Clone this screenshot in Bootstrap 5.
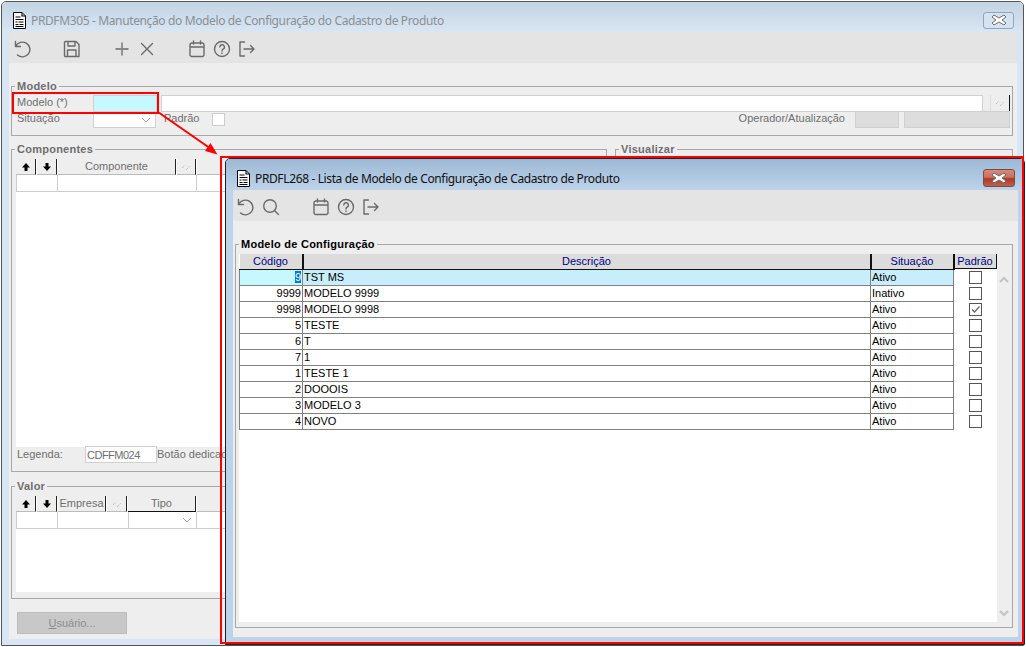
<!DOCTYPE html>
<html lang="pt">
<head>
<meta charset="utf-8">
<title>PRDFM305</title>
<link href="https://cdn.jsdelivr.net/npm/bootstrap@5.3.0/dist/css/bootstrap.min.css" rel="stylesheet">
<style>
html,body{margin:0;height:100%;background:#fff;overflow:hidden}
body{font:11px/13px "Liberation Sans",Arial,sans-serif;color:#6e6e6e;position:relative}
.win{position:absolute;border:1px solid #555;border-radius:5px 5px 0 0;overflow:hidden}
.win-back{left:1px;top:1px;width:1023px;height:645px;background:#d8e5f3;padding:0 6px 6px 7px}
.win-front{left:225px;top:158px;width:800px;height:487px;background:#bdd3ea;padding:0 6px 7px 7px;color:#000;border-color:#222}
.ttl{height:30px;margin:0 -6px 0 -7px;padding:6px 9px 0 11px}
.win-back .ttl{background:linear-gradient(#c3d3e2,#d9e6f4)}
.win-front .ttl{background:linear-gradient(#9db8d5,#bdd3ea);height:31px;padding-top:7px}
.ttl-text{font:12px/16px "Noto Sans",sans-serif;color:#8a8f96;margin-left:5px;padding-top:2px;letter-spacing:-.37px}
.win-front .ttl-text{color:#111}
.xbtn{width:31px;height:17px;border:1px solid #8fa6bd;border-radius:3px;background:#d5e2ef}
.win-front .xbtn{width:32px;height:18px;border-color:#7a4a44;background:linear-gradient(#d68a78 0,#c9705c 45%,#a83a28 55%,#c0604c 100%)}
.tbar{height:31px;background:#e4e4e4;padding:2px 0 0 4px}
.win-front .tbar{padding-left:3px}
.tic{width:18px;height:18px;flex:none;fill:none;stroke:#6a6a6a;stroke-width:1.4;stroke-linecap:round;stroke-linejoin:round}
.client-b{height:576px;background:#eee;padding:17px 4px 0 2px}
.client-f{height:416px;background:#eee;padding:17px 5px 0 2px}
.grp{border:1px solid #a8a8a8;margin:0;padding:0;min-width:0}
.grp legend{float:none;width:auto;font:bold 11px/13px "Liberation Sans",sans-serif;margin:0 0 0 -1px;padding:0 2px;letter-spacing:.25px}
.grp-m{height:56px;padding:2px 2px 0 5px}
.grp-m legend{margin-left:-2px}
.grp-c{height:329px;padding:3px 4px 0 4px}
.grp-v{height:119px;padding:3px 4px 0 4px}
.grp-w{height:456px;padding:3px 4px 0}
.grp-l{height:390px;padding:3px 0 0 3px}
.grp-l legend{margin-left:0}
.col-left{width:596px}
.frow{height:16px}
.lab-w{width:76px}
.lbt{padding-bottom:2px}
.fld{height:17px;border:1px solid #d0d0d0;background:#fff;margin-bottom:-1px}
.fld-cy{width:64px;background:#c6f9ff}
.fld-g{background:#ddd}
.chk-o{width:13px;height:13px;border:1px solid #ccc;background:#fff;margin-left:13px}
.ic-btn{width:20px;height:17px;background:#eee;border-right:1px solid #111;border-left:1px solid #ddd;margin-left:7px}
.panel{background:#fff}
.hc{height:16px;background:#eee;border-right:1px solid #222;border-bottom:1px solid #bbb;line-height:15px;text-align:center;margin-right:1px;flex:none}
.hc-on{border-bottom-color:#111}
.rc{height:17px;border:solid #ccc;border-width:0 1px 1px 0;flex:none;background:#fff}
.rc:first-child{border-left:1px solid #ccc}
.nm{background:#fff;width:72px;height:17px;border:1px solid #d0d0d0;padding-left:1px;line-height:17px;letter-spacing:-.5px}
.user-btn{width:110px;height:22px;background:#c8c8c8;border:1px solid #bbb;margin:13px 0 0 6px;line-height:21px;text-align:center;color:#8c8c8c}
.user-btn u{text-decoration:underline}
.list{width:758px;height:368px;background:#fff}
.sb{width:14px;height:368px;padding:22px 0 5px}
.gridt.table{width:714px;table-layout:fixed;border-collapse:collapse;margin:0;--bs-table-bg:transparent}
.gridt.table>:not(caption)>*>*{padding:0 1px;height:16px;line-height:15px;font-size:11px;border:1px solid #808080;color:#000;box-shadow:none;background:transparent;white-space:nowrap}
.gridt.table>thead>tr>th{height:15px;background:#dcdcdc;color:#000080;font-weight:400;text-align:center;border:0;border-right:2px solid #111;border-bottom:1px solid #111}
.gridt.table>tbody>tr.cur>td{background:#c8eefc}
.gridt.table>tbody>tr>td.num{text-align:right;padding-right:1px}
.gridt.table>tbody>tr.cur>td.num{background:#c6f9ff}
.hi{background:#0078d7;color:#fff}
.chkr{height:16px}
.bx{width:13px;height:13px;border:1px solid #555;background:#fff;display:block}
.thp{height:15px;background:#dcdcdc;color:#000080;text-align:center;line-height:15px;border-right:1px solid #111;border-bottom:1px solid #111;width:42px}
.redbox{position:absolute;border:2px solid #f00;pointer-events:none}
.rb1{left:12px;top:92px;width:147px;height:22px}
.rb2{left:220px;top:156px;width:804px;height:488px;border-width:2.5px}
.arrow{position:absolute;left:150px;top:105px;width:80px;height:60px;overflow:visible}
.flex-none{flex:none}
.tb-g7{margin-left:7px}
.tb-g8{margin-left:8px}
.tb-g32{margin-left:32px}
.fld-sel{width:63px}
.fld-a{width:44px;margin-left:10px}
.fld-b{width:106px;margin-left:5px}
.row2{margin-top:7px}
.pnl-c{height:288px}
.pnl-v{height:96px}
.leg-row{height:17px;margin:-1px 0 0 1px}
.leg-l{width:68px}
.w-a{width:20px}
.w-c{width:118px}
.w-s{width:19px}
.w-s2{width:20px}
.w-e{width:48px}
.w-t{width:68px}
.w-l{width:42px}
.w-m{width:139px}
.w-v{width:71px}
.c1{width:63px}
.c2{width:568px}
.c3{width:83px}
</style>
</head>
<body>
<svg width="0" height="0" class="d-block position-absolute">
<defs>
<symbol id="i-doc" viewBox="0 0 13 17"><path d="M1 .5h8l3.500 3.500v12.500H.5V.5z" fill="#fff" stroke="#000"/><path d="M9 .5V4h3.500M2.500 5h5M2.500 7.500h8M2.500 10h2M5.500 10h5M2.500 12.500h3M6.500 12.500h4M2.500 14.500h8" fill="none" stroke="#000" stroke-width="1.100"/></symbol>
<symbol id="i-undo" viewBox="0 0 18 18"><path d="M2.500 1.500V6.500H7.500M2.800 6.300A7.400 7.400 0 1 1 4.500 15"/></symbol>
<symbol id="i-save" viewBox="0 0 18 18"><path d="M2.500 1.500H13L16 4.500V16.500H2.500A1 1 0 0 1 1.500 15.500V2.500A1 1 0 0 1 2.500 1.500zM5 1.500V6H12V1.500M4.500 16.500V10H13V16.500"/></symbol>
<symbol id="i-plus" viewBox="0 0 18 18"><path d="M9 2.500V15.500M2.500 9H15.500" stroke="#888" stroke-width="1.800" stroke-linecap="butt"/></symbol>
<symbol id="i-x" viewBox="0 0 18 18"><path d="M3.500 3.500L14.500 14.500M14.500 3.500L3.500 14.500" stroke-width="1.400"/></symbol>
<symbol id="i-cal" viewBox="0 0 18 18"><path d="M3.500 3H14.500A2 2 0 0 1 16 5V15A2 2 0 0 1 14.500 16.500H3.500A2 2 0 0 1 2 15V5A2 2 0 0 1 3.500 3zM2 7H16M5.500 1V4M12.500 1V4"/></symbol>
<symbol id="i-help" viewBox="0 0 18 18"><circle cx="9" cy="9" r="7.500"/><path d="M6.800 7A2.300 2.300 0 1 1 10 9.200C9.300 9.600 9 10 9 11M9 13V13.600"/></symbol>
<symbol id="i-exit" viewBox="0 0 18 18"><path d="M6.500 2H2V16H6.500M6 9H16M12.500 5.500L16 9L12.500 12.500"/></symbol>
<symbol id="i-mag" viewBox="0 0 18 18"><circle cx="8" cy="8" r="6.300"/><path d="M12.500 12.500L16.500 16.500"/></symbol>
<symbol id="i-sl" viewBox="0 0 12 10"><path d="M2 6L5 3M6 8L10 4" stroke="#aaa" stroke-dasharray="1 1" fill="none"/></symbol>
<symbol id="i-up" viewBox="0 0 10 10"><path d="M5 1L9 5.500H6.500V9H3.500V5.500H1z" fill="#000"/></symbol>
<symbol id="i-dn" viewBox="0 0 10 10"><path d="M5 9L9 4.500H6.500V1H3.500V4.500H1z" fill="#000"/></symbol>
<symbol id="i-cv" viewBox="0 0 10 6"><path d="M1 1L5 5L9 1" fill="none" stroke="#aaa"/></symbol>
<symbol id="i-xx" viewBox="0 0 16 12"><path d="M3 1L8 4L13 1L15 3L11 6L15 9L13 11L8 8L3 11L1 9L5 6L1 3z" fill="#fff" stroke="#6d6d6d"/></symbol>
</defs>
</svg>

<div class="win win-back">
  <div class="ttl d-flex align-items-center">
    <svg width="13" height="17"><use href="#i-doc"/></svg>
    <span class="ttl-text flex-grow-1">PRDFM305 - Manutenção do Modelo de Configuração do Cadastro de Produto</span>
    <div class="xbtn d-flex align-items-center justify-content-center"><svg width="16" height="12"><use href="#i-xx"/></svg></div>
  </div>
  <div class="tbar d-flex align-items-center">
    <svg class="tic"><use href="#i-undo"/></svg>
    <svg class="tic tb-g32"><use href="#i-save"/></svg>
    <svg class="tic tb-g32"><use href="#i-plus"/></svg>
    <svg class="tic tb-g7"><use href="#i-x"/></svg>
    <svg class="tic tb-g32"><use href="#i-cal"/></svg>
    <svg class="tic tb-g7"><use href="#i-help"/></svg>
    <svg class="tic tb-g7"><use href="#i-exit"/></svg>
  </div>
  <div class="client-b">
    <fieldset class="grp grp-m">
      <legend>Modelo</legend>
      <div class="frow d-flex align-items-center">
        <span class="lab-w lbt">Modelo (*)</span>
        <div class="fld fld-cy"></div>
        <div class="fld flex-grow-1 ms-1"></div>
        <div class="ic-btn d-flex align-items-center justify-content-center"><svg width="12" height="10"><use href="#i-sl"/></svg></div>
      </div>
      <div class="frow d-flex align-items-center">
        <span class="lab-w lbt">Situação</span>
        <div class="fld fld-sel d-flex align-items-center justify-content-end pe-1"><svg width="10" height="6"><use href="#i-cv"/></svg></div>
        <span class="ms-2 lbt">Padrão</span>
        <div class="chk-o"></div>
        <span class="ms-auto lbt">Operador/Atualização</span>
        <div class="fld fld-g fld-a"></div>
        <div class="fld fld-g fld-b"></div>
      </div>
    </fieldset>
    <div class="d-flex gap-2 row2">
      <div class="col-left flex-none">
        <fieldset class="grp grp-c">
          <legend>Componentes</legend>
          <div class="panel pnl-c">
            <div class="d-flex">
              <div class="hc w-a"><svg width="10" height="10"><use href="#i-up"/></svg></div>
              <div class="hc w-a"><svg width="10" height="10"><use href="#i-dn"/></svg></div>
              <div class="hc w-c">Componente</div>
              <div class="hc w-s"><svg width="12" height="10"><use href="#i-sl"/></svg></div>
              <div class="hc flex-grow-1"></div>
            </div>
            <div class="d-flex">
              <div class="rc w-l"></div>
              <div class="rc w-m"></div>
              <div class="rc flex-grow-1"></div>
            </div>
          </div>
          <div class="d-flex align-items-center leg-row">
            <span class="leg-l">Legenda:</span>
            <div class="nm">CDFFM024</div>
            <span>Botão dedicado</span>
          </div>
        </fieldset>
        <fieldset class="grp grp-v mt-2">
          <legend>Valor</legend>
          <div class="panel pnl-v">
            <div class="d-flex">
              <div class="hc w-a"><svg width="10" height="10"><use href="#i-up"/></svg></div>
              <div class="hc w-a"><svg width="10" height="10"><use href="#i-dn"/></svg></div>
              <div class="hc w-e">Empresa</div>
              <div class="hc w-s2"><svg width="12" height="10"><use href="#i-sl"/></svg></div>
              <div class="hc hc-on w-t">Tipo</div>
              <div class="hc flex-grow-1">Código</div>
            </div>
            <div class="d-flex">
              <div class="rc w-l"></div>
              <div class="rc w-v"></div>
              <div class="rc w-t d-flex align-items-center justify-content-end pe-1"><svg width="10" height="6"><use href="#i-cv"/></svg></div>
              <div class="rc flex-grow-1"></div>
            </div>
          </div>
        </fieldset>
        <div class="user-btn"><u>U</u>suário...</div>
      </div>
      <div class="flex-grow-1">
        <fieldset class="grp grp-w"><legend>Visualizar</legend></fieldset>
      </div>
    </div>
  </div>
</div>

<div class="redbox rb1"></div>
<svg class="arrow" viewBox="0 0 80 60"><path d="M8 7L64 46" stroke="#f00" stroke-width="2" fill="none"/><path d="M67.500 49.500L55 46L60.500 38z" fill="#f00"/></svg>

<div class="win win-front">
  <div class="ttl d-flex align-items-center">
    <svg width="13" height="17"><use href="#i-doc"/></svg>
    <span class="ttl-text flex-grow-1">PRDFL268 - Lista de Modelo de Configuração de Cadastro de Produto</span>
    <div class="xbtn d-flex align-items-center justify-content-center"><svg width="16" height="12"><use href="#i-xx"/></svg></div>
  </div>
  <div class="tbar d-flex align-items-center">
    <svg class="tic"><use href="#i-undo"/></svg>
    <svg class="tic tb-g8"><use href="#i-mag"/></svg>
    <svg class="tic tb-g32"><use href="#i-cal"/></svg>
    <svg class="tic tb-g7"><use href="#i-help"/></svg>
    <svg class="tic tb-g7"><use href="#i-exit"/></svg>
  </div>
  <div class="client-f">
    <fieldset class="grp grp-l">
      <legend>Modelo de Configuração</legend>
      <div class="d-flex">
        <div class="list d-flex align-items-start">
          <table class="table gridt">
            <colgroup><col class="c1"><col class="c2"><col class="c3"></colgroup>
            <thead><tr><th>Código</th><th>Descrição</th><th>Situação</th></tr></thead>
            <tbody>
              <tr class="cur"><td class="num"><span class="hi">9</span></td><td>TST MS</td><td>Ativo</td></tr>
              <tr><td class="num">9999</td><td>MODELO 9999</td><td>Inativo</td></tr>
              <tr><td class="num">9998</td><td>MODELO 9998</td><td>Ativo</td></tr>
              <tr><td class="num">5</td><td>TESTE</td><td>Ativo</td></tr>
              <tr><td class="num">6</td><td>T</td><td>Ativo</td></tr>
              <tr><td class="num">7</td><td>1</td><td>Ativo</td></tr>
              <tr><td class="num">1</td><td>TESTE 1</td><td>Ativo</td></tr>
              <tr><td class="num">2</td><td>DOOOIS</td><td>Ativo</td></tr>
              <tr><td class="num">3</td><td>MODELO 3</td><td>Ativo</td></tr>
              <tr><td class="num">4</td><td>NOVO</td><td>Ativo</td></tr>
            </tbody>
          </table>
          <div class="flex-none">
            <div class="thp">Padrão</div>
            <div class="chkr d-flex align-items-center justify-content-center"><span class="bx"></span></div>
            <div class="chkr d-flex align-items-center justify-content-center"><span class="bx"></span></div>
            <div class="chkr d-flex align-items-center justify-content-center"><svg class="bx" viewBox="0 0 11 11"><path d="M2 5.500L4.500 8L9.500 2.500" fill="none" stroke="#666" stroke-width="1.300"/></svg></div>
            <div class="chkr d-flex align-items-center justify-content-center"><span class="bx"></span></div>
            <div class="chkr d-flex align-items-center justify-content-center"><span class="bx"></span></div>
            <div class="chkr d-flex align-items-center justify-content-center"><span class="bx"></span></div>
            <div class="chkr d-flex align-items-center justify-content-center"><span class="bx"></span></div>
            <div class="chkr d-flex align-items-center justify-content-center"><span class="bx"></span></div>
            <div class="chkr d-flex align-items-center justify-content-center"><span class="bx"></span></div>
            <div class="chkr d-flex align-items-center justify-content-center"><span class="bx"></span></div>
          </div>
        </div>
        <div class="sb d-flex flex-column justify-content-between align-items-center">
          <svg width="10" height="7" viewBox="0 0 10 7"><path d="M1 6L5 2L9 6" fill="none" stroke="#c4c4c4" stroke-width="2"/></svg>
          <svg width="10" height="7" viewBox="0 0 10 7"><path d="M1 1L5 5L9 1" fill="none" stroke="#c4c4c4" stroke-width="2"/></svg>
        </div>
      </div>
    </fieldset>
  </div>
</div>

<div class="redbox rb2"></div>
</body>
</html>
